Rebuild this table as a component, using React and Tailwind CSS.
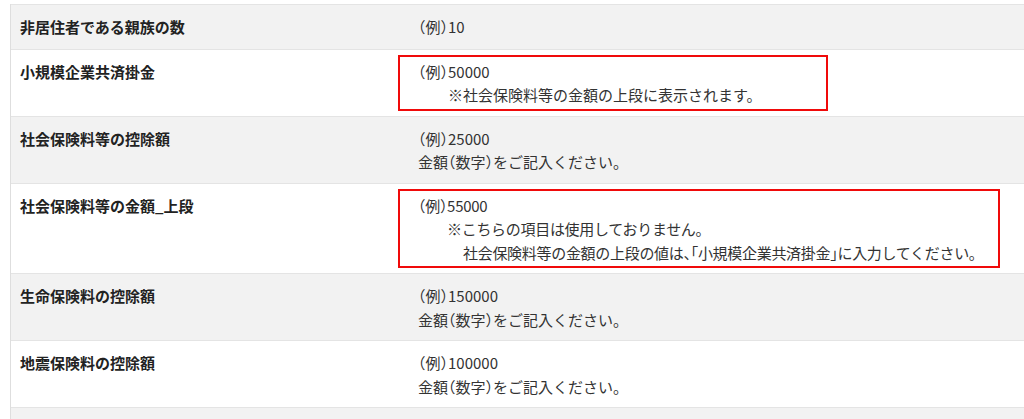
const rows = [
  { label: "非居住者である親族の数", lines: [["（例）10", 0]], gray: true },
  {
    label: "小規模企業共済掛金",
    lines: [
      ["（例）50000", 0],
      ["※社会保険料等の金額の上段に表示されます。", 30],
    ],
    box: "w-[430px]",
  },
  {
    label: "社会保険料等の控除額",
    lines: [
      ["（例）25000", 0],
      ["金額（数字）をご記入ください。", 0],
    ],
    gray: true,
  },
  {
    label: "社会保険料等の金額_上段",
    lines: [
      ["（例）55000", 0],
      ["※こちらの項目は使用しておりません。", 29],
      ["社会保険料等の金額の上段の値は、「小規模企業共済掛金」に入力してください。", 45],
    ],
    box: "w-[602px] tracking-[-0.3px] whitespace-nowrap",
  },
  {
    label: "生命保険料の控除額",
    lines: [
      ["（例）150000", 0],
      ["金額（数字）をご記入ください。", 0],
    ],
    gray: true,
  },
  {
    label: "地震保険料の控除額",
    lines: [
      ["（例）100000", 0],
      ["金額（数字）をご記入ください。", 0],
    ],
  },
  { label: "", lines: [["", 0]], gray: true },
];

// full-width brackets drawn half width, like the reference
function Text({ text }) {
  const parts = text.split(/([（）「」、])/);
  return parts.map((p, i) =>
    /[（）「」]/.test(p) || (p === "、" && parts[i + 2] === "「") ? (
      <span key={i} className="[font-feature-settings:'halt']">
        {p}
      </span>
    ) : (
      <span key={i}>{p}</span>
    )
  );
}

function App() {
  return (
    <div
      className="bg-white pl-[10px] pt-[4px] h-[419px] overflow-hidden text-[15px] leading-[23.5px]"
      style={{ fontFamily: '"Noto Sans CJK JP", "Noto Sans", sans-serif' }}
    >
      <div className="border-l border-[#dedede]">
        {rows.map((row, i) => (
          <div
            key={i}
            className={`flex border-t border-[#e4e4e4] ${
              row.gray ? "bg-[#f2f2f2]" : "bg-white"
            }`}
          >
            <div className="w-[382px] shrink-0 pl-[9px] py-[10px] font-bold text-[#222]">
              {row.label || "\u00a0"}
            </div>
            <div className="flex-1 pt-[5px] pb-[5px] pl-[5px]">
              <div
                className={`border-2 pt-[3px] pb-[2px] pl-[18px] text-[#333] ${
                  row.box ? "border-[#f00a0a] " + row.box : "border-transparent"
                }`}
              >
                {row.lines.map(([t, indent], j) => (
                  <div key={j} style={{ paddingLeft: indent }}>
                    {t ? <Text text={t} /> : "\u00a0"}
                  </div>
                ))}
              </div>
            </div>
          </div>
        ))}
      </div>
    </div>
  );
}

export default App;
